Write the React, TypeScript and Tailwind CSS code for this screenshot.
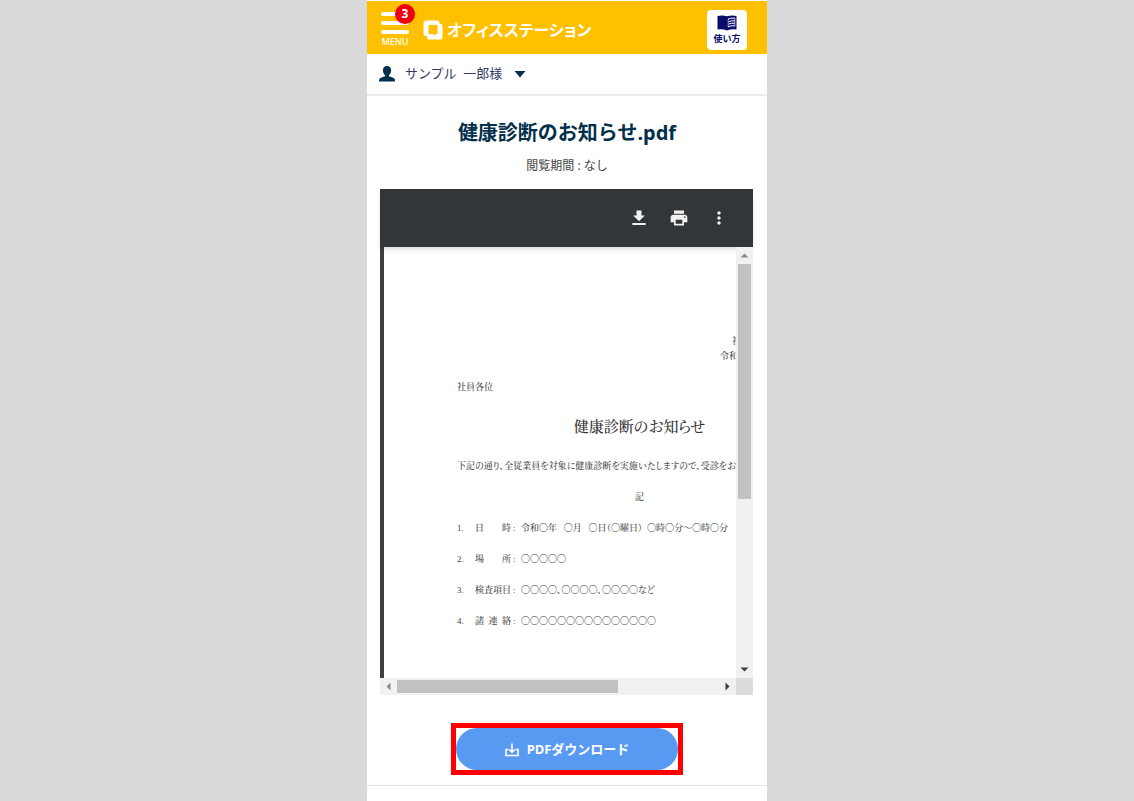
import React from "react";

const SANS = "font-['Noto_Sans','Noto_Sans_CJK_JP',sans-serif]";
const MINCHO = "font-['Liberation_Serif','Noto_Serif_CJK_JP','Noto_Sans_CJK_JP',serif]";

function LogoMark() {
  return (
    <svg viewBox="0 0 20 20" className="size-5" aria-hidden="true">
      <path
        fillRule="evenodd"
        fill="#fff"
        d="M3.500 0.500H14.500Q16.500 0.500 16.500 2.500V4H17.500Q19.500 4 19.500 6V17.500Q19.500 19.500 17.500 19.500H6Q4 19.500 4 17.500V16H2.500Q0.500 16 0.500 14V3.500Q0.500 0.500 3.500 0.500ZM5.500 5V14H10L12 16V14H14.500V5Z"
      />
    </svg>
  );
}

function BookIcon() {
  return (
    <svg viewBox="0 0 20 16" className="h-4 w-5" aria-hidden="true">
      <path fill="#0b0b6b" d="M0.500 1Q5 0 10 1.200Q15 0 19.500 1V14.500Q15 13.500 10 15.500Q5 13.500 0.500 14.500Z" />
      <path
        d="M11 4.200Q13 2.800 17.800 3.200M11.800 6.600Q14 5.600 17.800 5.800M11.800 9Q14 8 17.800 8.200M11 11.800Q14 10.400 17.800 10.800"
        fill="none"
        stroke="#fff"
        strokeWidth="1"
      />
      <path d="M17.800 2.800V11.300M11.200 3.800V12.200" fill="none" stroke="#fff" strokeWidth="0.600" />
    </svg>
  );
}

function Header() {
  return (
    <header className="mt-px flex h-[53px] items-center bg-[#ffc000] pt-1 pr-5 pl-3.5">
      <button type="button" className="relative flex w-7 flex-col items-center text-white">
        <span className="flex flex-col gap-[5px]">
          <span className="h-1 w-7 rounded-full bg-white" />
          <span className="h-1 w-7 rounded-full bg-white" />
          <span className="h-1 w-7 rounded-full bg-white" />
        </span>
        <span className="mt-0.5 text-[9px] leading-3 font-medium">MENU</span>
        <span className="absolute -top-2 left-3.5 grid size-5 place-items-center rounded-full bg-[#ee0010] text-xs leading-none font-bold shadow">
          3
        </span>
      </button>
      <a href="#" className="ml-3.5 flex items-center gap-1 text-white">
        <LogoMark />
        <span className="text-base leading-5 font-bold [font-feature-settings:'palt']">オフィスステーション</span>
      </a>
      <a
        href="#"
        className="ml-auto flex size-10 flex-col items-center justify-center gap-0.5 rounded bg-white text-[9px] leading-3 font-bold text-[#0b0b6b]"
      >
        <BookIcon />
        使い方
      </a>
    </header>
  );
}

function UserBar() {
  return (
    <div className="h-[42px] border-b-2 border-[#ebebeb] bg-white">
      <button type="button" className="flex h-10 items-center pl-3 text-[13px] text-[#333a66]">
        <svg viewBox="0 0 16 16" className="mr-2.5 size-4" aria-hidden="true">
          <path
            fill="#04304b"
            d="M8 0C10.600 0 12.200 1.800 12.100 4.500C12 6.800 11 8.400 9.900 9.200V10.300C12 11 14.500 11.700 15.300 12.600C15.900 13.300 16 14.500 16 15.500H0C0 14.500 0.100 13.300 0.700 12.600C1.500 11.700 4 11 6.100 10.300V9.200C5 8.400 4 6.800 3.900 4.500C3.800 1.800 5.400 0 8 0Z"
          />
        </svg>
        <span>サンプル&nbsp; 一郎様</span>
        <svg viewBox="0 0 12 7" className="ml-3 h-[7px] w-3" aria-hidden="true">
          <path d="M0.500 0H11.500L6 6.500Z" fill="#04304b" />
        </svg>
      </button>
    </div>
  );
}

function ViewerToolbar() {
  return (
    <div className="relative flex h-[58px] items-center justify-end gap-5 bg-[#323639] pr-6 text-[#f1f1f1] shadow-md">
      <button type="button" aria-label="ダウンロード">
        <svg viewBox="0 0 24 24" className="size-5" fill="currentColor" aria-hidden="true">
          <path d="M19 9h-4V3H9v6H5l7 7 7-7zM4 18v2.500h16v-2.500H4z" />
        </svg>
      </button>
      <button type="button" aria-label="印刷">
        <svg viewBox="0 0 24 24" className="size-5" fill="currentColor" aria-hidden="true">
          <path d="M19 8H5c-1.660 0-3 1.340-3 3v6h4v4h12v-4h4v-6c0-1.660-1.340-3-3-3zm-3 11H8v-5h8v5zm3-7c-.55 0-1-.45-1-1s.45-1 1-1 1 .45 1 1-.45 1-1 1zm-1-9H6v4h12V3z" />
        </svg>
      </button>
      <button type="button" aria-label="その他">
        <svg viewBox="0 0 24 24" className="size-5" fill="currentColor" aria-hidden="true">
          <path d="M12 8c1.100 0 2-.9 2-2s-.9-2-2-2-2 .9-2 2 .9 2 2 2zm0 2c-1.100 0-2 .9-2 2s.9 2 2 2 2-.9 2-2-.9-2-2-2zm0 6c-1.100 0-2 .9-2 2s.9 2 2 2 2-.9 2-2-.9-2-2-2z" />
        </svg>
      </button>
    </div>
  );
}

const items = [
  { label: ["日", "時"], value: "令和〇年\u00a0\u00a0 〇月\u00a0\u00a0 〇日（〇曜日）\u00a0 〇時〇分～〇時〇分" },
  { label: ["場", "所"], value: "〇〇〇〇〇" },
  { label: ["検", "査", "項", "目"], value: "〇〇〇〇、〇〇〇〇、〇〇〇〇など" },
  { label: ["諸", "連", "絡"], value: "〇〇〇〇〇〇〇〇〇〇〇〇〇〇〇" },
];

function DocumentPage() {
  return (
    <article
      className={`${MINCHO} flex w-[511px] flex-col px-[73px] pt-[87px] text-[9px] leading-[15px] font-medium whitespace-nowrap text-[#444] [font-feature-settings:'palt']`}
    >
      <div className="w-[102px] self-end">
        <p className="pl-3">社</p>
        <p>令和</p>
      </div>
      <p className="mt-4">社員各位</p>
      <h2 className="mt-5 text-center text-[15px] leading-6 text-[#333]">健康診断のお知らせ</h2>
      <p className="mt-5">下記の通り、全従業員を対象に健康診断を実施いたしますので、受診をお願</p>
      <p className="mt-4 text-center">記</p>
      <ol className="mt-4 flex flex-col gap-4">
        {items.map((item, i) => (
          <li key={i} className="flex [font-feature-settings:normal]">
            <span className="w-[18px]">{i + 1}.</span>
            <span className="flex w-9 justify-between">
              {item.label.map((c) => (
                <span key={c}>{c}</span>
              ))}
            </span>
            <span className="w-2.5 pl-0.5">:</span>
            <span className="[font-feature-settings:'palt']">{item.value}</span>
          </li>
        ))}
      </ol>
    </article>
  );
}

function Arrow({ d, muted }: { d: string; muted?: boolean }) {
  return (
    <svg viewBox="0 0 17 17" className="size-[17px] shrink-0" aria-hidden="true">
      <path d={d} fill={muted ? "#8b8b8b" : "#404040"} />
    </svg>
  );
}

function PdfViewer() {
  return (
    <section aria-label="PDFビューア" className="mr-3.5 ml-[13px]">
      <ViewerToolbar />
      <div className="grid h-[448px] grid-cols-[minmax(0,1fr)_17px] grid-rows-[minmax(0,1fr)_17px]">
        <div className="overflow-hidden border-l-4 border-[#3b3f42] bg-white">
          <DocumentPage />
        </div>
        <div className="relative flex flex-col items-center bg-[#f1f1f1]">
          <Arrow d="M4.500 10.500L8.500 6.500L12.500 10.500Z" muted />
          <div className="h-[235px] w-[13px] bg-[#c1c1c1]" />
          <div className="grow" />
          <Arrow d="M4.500 6.500L8.500 10.500L12.500 6.500Z" />
        </div>
        <div className="flex items-center bg-[#f1f1f1]">
          <Arrow d="M10.500 4.500L6.500 8.500L10.500 12.500Z" muted />
          <div className="h-[13px] w-[221px] bg-[#c1c1c1]" />
          <div className="grow" />
          <Arrow d="M6.500 4.500L10.500 8.500L6.500 12.500Z" />
        </div>
        <div className="bg-[#dcdcdc]" />
      </div>
    </section>
  );
}

export default function App() {
  return (
    <div lang="ja" className={`${SANS} min-h-screen bg-[#d9d9d9]`}>
      <div className="mx-auto flex min-h-screen max-w-[400px] flex-col bg-white">
        <Header />
        <UserBar />
        <main className="flex flex-col border-b border-[#e3e3e3] pb-2.5">
          <h1 className="mt-[21px] text-center text-xl leading-8 font-bold text-[#04304b]">健康診断のお知らせ.pdf</h1>
          <p className="mt-2 mb-[15px] text-center text-xs leading-[17px] text-[#444]">閲覧期間 : なし</p>
          <PdfViewer />
          <div className="mt-7 self-center border-5 border-[#ff0000]">
            <button
              type="button"
              className="flex h-[42px] w-[222px] items-center justify-center gap-2 rounded-full bg-[#5899f2] pt-0.5 text-[13px] font-bold text-white"
            >
              <svg viewBox="0 0 14 14" className="size-3.5" fill="none" stroke="currentColor" strokeWidth="1.600" aria-hidden="true">
                <path d="M3.500 6.500H1V12.500H13V6.500H10.500M7 0.500V9M4.200 6.500L7 9.300L9.800 6.500" />
              </svg>
              PDFダウンロード
            </button>
          </div>
        </main>
      </div>
    </div>
  );
}
